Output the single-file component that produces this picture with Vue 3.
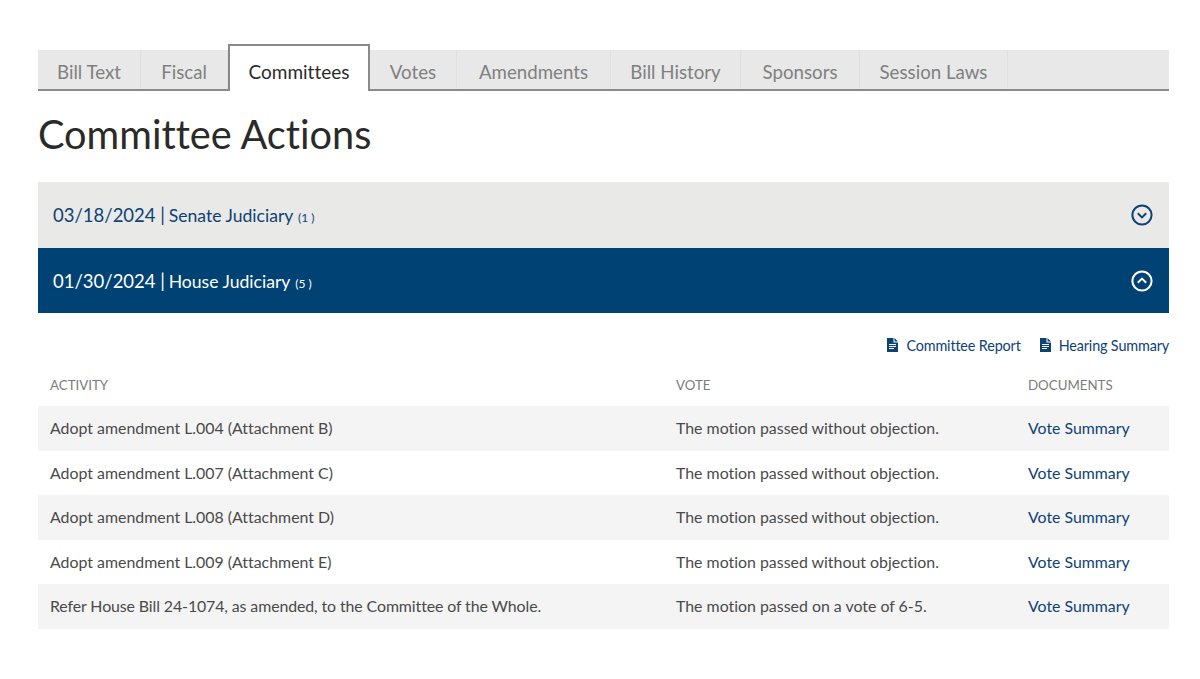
<script setup>
const tabs = [
  ['Bill Text', 103], ['Fiscal', 87], ['Committees', 142], ['Votes', 87],
  ['Amendments', 154], ['Bill History', 130], ['Sponsors', 119], ['Session Laws', 148],
]
const rows = [
  ['Adopt amendment L.004 (Attachment B)','The motion passed without objection.'],
  ['Adopt amendment L.007 (Attachment C)','The motion passed without objection.'],
  ['Adopt amendment L.008 (Attachment D)','The motion passed without objection.'],
  ['Adopt amendment L.009 (Attachment E)','The motion passed without objection.'],
  ['Refer House Bill 24-1074, as amended, to the Committee of the Whole.','The motion passed on a vote of 6-5.'],
]
</script>

<template>
  <div class="page">
    <nav class="tabs">
      <div v-for="t in tabs" :key="t[0]" class="tab" :class="{ active: t[0] === 'Committees' }" :style="{ width: t[1] + 'px' }">{{ t[0] }}</div>
    </nav>
    <h1 class="title">Committee Actions</h1>
    <div class="acc closed">
      <span>03/18/2024 | <span class="name">Senate Judiciary</span> <small>(1 )</small></span>
      <svg class="chev" viewBox="0 0 22 22" width="22" height="22"><circle cx="11" cy="11" r="9.6"/><path d="M6.8 9.3 11 13.4l4.2-4.1"/></svg>
    </div>
    <div class="acc open">
      <span>01/30/2024 | <span class="name">House Judiciary</span> <small>(5 )</small></span>
      <svg class="chev" viewBox="0 0 22 22" width="22" height="22"><circle cx="11" cy="11" r="9.6"/><path d="M6.8 12.7 11 8.6l4.2 4.1"/></svg>
    </div>
    <div class="links">
      <a v-for="l in ['Committee Report','Hearing Summary']" :key="l" class="doc">
        <svg viewBox="0 0 11 14" width="11" height="14"><path fill-rule="evenodd" d="M0 0h6.5v4.5H11V14H0zM7.5 0 11 3.5H7.5zM2 6v1h7V6zM2 8v1h7V8zM2 10v1h5v-1z"/></svg>
        {{ l }}
      </a>
    </div>
    <div class="row head"><div>ACTIVITY</div><div>VOTE</div><div>DOCUMENTS</div></div>
    <div v-for="(r, i) in rows" :key="i" class="row body" :class="{ stripe: i % 2 === 0 }">
      <div :class="{ tight: i === 4 }">{{ r[0] }}</div><div>{{ r[1] }}</div><a class="vs">Vote Summary</a>
    </div>
  </div>
</template>

<style>
html, body { background: #fff; }
</style>
<style scoped>
.page { box-sizing: border-box; width: 1200px; height: 679px; padding: 44px 31px 0 38px; font-family: Lato, "Open Sans", sans-serif; font-variant-ligatures: none; color: #4a4a4a; overflow: hidden; }
.tabs { display: flex; align-items: flex-end; height: 45px; background: linear-gradient(#e8e8e8, #e8e8e8) 0 6px / 100% 39px no-repeat; border-bottom: 2px solid #8a8a8a; }
.tab { box-sizing: border-box; height: 39px; padding-top: 4px; display: flex; align-items: center; justify-content: center; font-size: 18.7px; color: #808080; border-right: 1px solid #e0e0e0; white-space: nowrap; }
.tab.active { height: 47px; margin-bottom: -2px; padding-top: 6px; background: #fff; color: #2b2b2b; font-size: 19px; border: 2px solid #8a8a8a; border-bottom: 0; }
.title { margin: 18px 0 0; font-size: 39.7px; line-height: 50px; font-weight: 400; color: #2a2a28; }
.acc { display: flex; justify-content: space-between; align-items: center; padding: 0 16px 0 15px; font-size: 18.5px; }
.acc .name { font-size: 17.6px; margin-left: -1px; }
.acc small { font-size: 12px; }
.closed { margin-top: 23px; height: 66px; background: #e9e9e8; color: #0e4275; }
.open { height: 65px; background: #004274; color: #fff; }
.chev { fill: none; stroke: currentColor; stroke-width: 2; }
.links { display: flex; justify-content: flex-end; gap: 19px; height: 59px; padding-top: 23px; box-sizing: border-box; font-size: 14.4px; letter-spacing: -0.15px; color: #0e4275; }
.doc { display: flex; align-items: center; gap: 8px; height: 18px; }
.doc svg { fill: #0e4275; }
.row { display: grid; grid-template-columns: 626px 352px 1fr; padding-left: 12px; align-items: center; }
.head { height: 26px; padding-bottom: 8px; font-size: 13.3px; color: #7c7c7c; }
.body { box-sizing: border-box; height: 44.6px; padding-bottom: 1.5px; font-size: 15.9px; color: #4a4a4a; }
.tight { letter-spacing: -0.1px; }
.stripe { background: #f4f4f4; }
.vs { color: #0e4275; font-size: 15.85px; }
</style>
